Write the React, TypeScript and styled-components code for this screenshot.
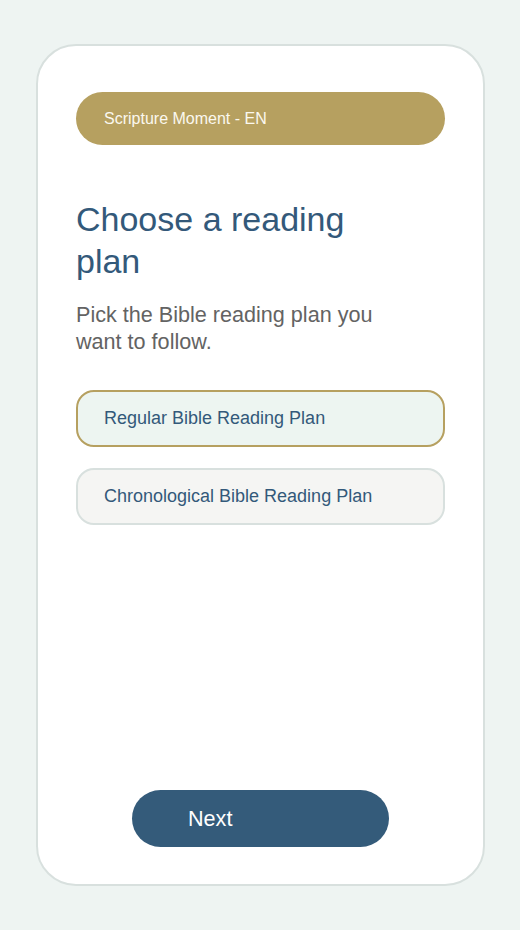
import styled, { createGlobalStyle } from "styled-components";
import { useState } from "react";

const Global = createGlobalStyle`
  html, body {
    margin: 0;
    padding: 0;
    background: #eef4f2;
    font-family: "Liberation Sans", Arial, sans-serif;
  }
`;

const Page = styled.div`
  min-height: 930px;
  box-sizing: border-box;
  padding: 44px 0 0 36px;
  display: flex;
`;

const Card = styled.div`
  width: 449px;
  height: 842px;
  box-sizing: border-box;
  border: 2px solid #d8e0de;
  border-radius: 40px;
  background: #fff;
  padding: 46px 38px 37px;
  display: flex;
  flex-direction: column;
`;

const Badge = styled.div`
  height: 53px;
  border-radius: 27px;
  background: #b6a060;
  color: #fbf8ef;
  font-size: 16px;
  display: flex;
  align-items: center;
  padding: 0 28px;
`;

const Title = styled.h1`
  margin: 53px 0 0;
  max-width: 320px;
  font-size: 34px;
  font-weight: 400;
  line-height: 42px;
  color: #33597a;
`;

const Lead = styled.p`
  margin: 19px 0 0;
  max-width: 320px;
  font-size: 21.6px;
  line-height: 27px;
  color: #636363;
`;

const Options = styled.div`
  margin-top: 35px;
  display: flex;
  flex-direction: column;
  gap: 21px;
`;

const Option = styled.button<{ $active: boolean }>`
  height: 57px;
  box-sizing: border-box;
  border-radius: 18px;
  border: 2px solid ${(p) => (p.$active ? "#b6a060" : "#d8e0de")};
  background: ${(p) => (p.$active ? "#edf5f1" : "#f5f5f3")};
  color: #33597a;
  font-family: inherit;
  font-size: 18px;
  text-align: left;
  padding: 0 26px;
  cursor: pointer;
`;

const Footer = styled.div`
  margin-top: auto;
  display: flex;
  justify-content: center;
`;

const Next = styled.button`
  width: 257px;
  height: 57px;
  border: none;
  border-radius: 29px;
  background: #345b7a;
  color: #fff;
  font-family: inherit;
  font-size: 21.6px;
  text-align: left;
  padding: 0 56px;
  cursor: pointer;
`;

const plans = ["Regular Bible Reading Plan", "Chronological Bible Reading Plan"];

export default function App() {
  const [picked, setPicked] = useState(0);
  return (
    <Page>
      <Global />
      <Card>
        <Badge>Scripture Moment - EN</Badge>
        <Title>Choose a reading plan</Title>
        <Lead>Pick the Bible reading plan you want to follow.</Lead>
        <Options>
          {plans.map((p, i) => (
            <Option key={p} $active={picked === i} onClick={() => setPicked(i)}>
              {p}
            </Option>
          ))}
        </Options>
        <Footer>
          <Next>Next</Next>
        </Footer>
      </Card>
    </Page>
  );
}
